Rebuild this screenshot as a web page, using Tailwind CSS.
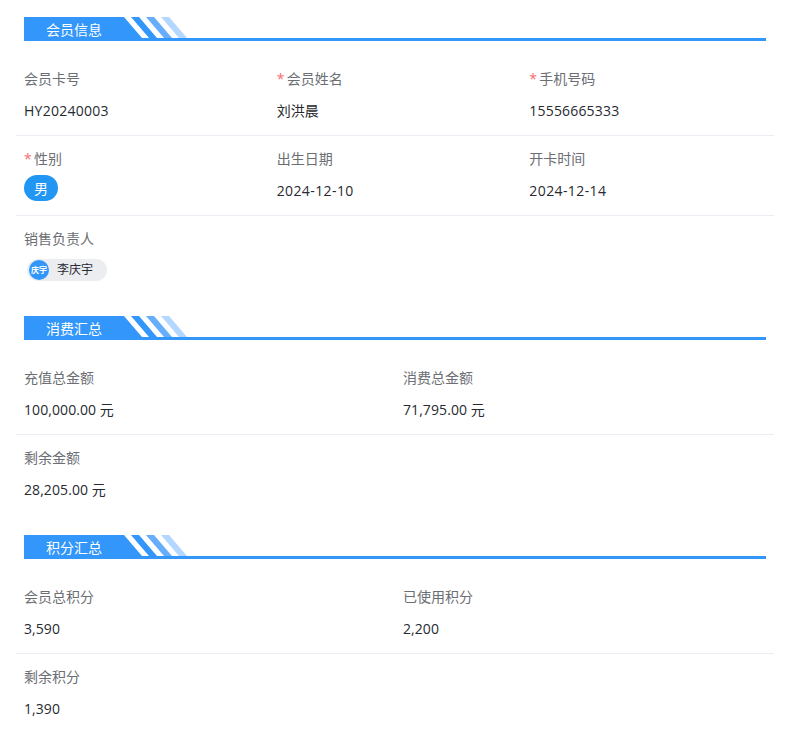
<!DOCTYPE html>
<html lang="zh">
<head>
<meta charset="utf-8">
<script src="https://cdn.jsdelivr.net/npm/@tailwindcss/browser@4"></script>
</head>
<body class="bg-white font-['Open_Sans','Noto_Sans_CJK_SC',sans-serif] text-sm text-[#272a30]">
<main class="w-[796px] h-[731px] overflow-hidden pt-[17px] pl-4 pr-[22px]">

<header class="relative mx-2 h-6 border-b-[3px] border-[#3296fa]">
  <svg class="absolute left-0 top-0" width="165" height="21" viewBox="0 0 165 21"><polygon points="0,0 100,0 118,21 0,21" fill="#3296fa"/><polygon points="107,0 115,0 133,21 125,21" fill="#3296fa"/><polygon points="122,0 130,0 148,21 140,21" fill="#66adfb"/><polygon points="137,0 145,0 163,21 155,21" fill="#b3d7fe"/></svg>
  <h2 class="absolute left-[22px] top-0 leading-[25px] text-sm text-white">会员信息</h2>
</header>
<section class="grid grid-cols-3 mt-[17px]">
  <div class="px-2 pt-[11px] h-[78px] border-b border-[#ebeef5]"><div class="h-5 leading-5 text-[#6b6e73]">会员卡号</div><div class="mt-3 leading-5 tracking-[0.25px]">HY20240003</div></div>
  <div class="px-2 pt-[11px] h-[78px] border-b border-[#ebeef5]"><div class="h-5 leading-5 text-[#6b6e73]"><span class="inline-block w-[10px] text-[#f56c6c]">*</span>会员姓名</div><div class="mt-3 leading-5">刘洪晨</div></div>
  <div class="px-2 pt-[11px] h-[78px] border-b border-[#ebeef5]"><div class="h-5 leading-5 text-[#6b6e73]"><span class="inline-block w-[10px] text-[#f56c6c]">*</span>手机号码</div><div class="mt-3 leading-5 tracking-[0.18px]">15556665333</div></div>
  <div class="px-2 pt-[13px] h-20 border-b border-[#ebeef5]"><div class="h-5 leading-5 text-[#6b6e73]"><span class="inline-block w-[10px] text-[#f56c6c]">*</span>性别</div><div class="mt-[6px] w-[34px] h-[26px] rounded-full bg-[#2196f3] text-white text-center leading-[27px]">男</div></div>
  <div class="px-2 pt-[13px] h-20 border-b border-[#ebeef5]"><div class="h-5 leading-5 text-[#6b6e73]">出生日期</div><div class="mt-3 leading-5 tracking-[0.4px]">2024-12-10</div></div>
  <div class="px-2 pt-[13px] h-20 border-b border-[#ebeef5]"><div class="h-5 leading-5 text-[#6b6e73]">开卡时间</div><div class="mt-3 leading-5 tracking-[0.4px]">2024-12-14</div></div>
  <div class="col-span-3 px-2 pt-[13px] h-[100px]"><div class="h-5 leading-5 text-[#6b6e73]">销售负责人</div>
    <div class="mt-[10px] ml-[3px] w-[80px] h-[22px] rounded-full bg-[#ebedf0] flex items-center pl-[2px]"><span class="w-5 h-5 rounded-full bg-[#3296fa] text-white text-[8px] font-bold flex items-center justify-center">庆宇</span><span class="ml-2 text-xs">李庆宇</span></div></div>
</section>

<header class="relative mx-2 h-6 border-b-[3px] border-[#3296fa]">
  <svg class="absolute left-0 top-0" width="165" height="21" viewBox="0 0 165 21"><polygon points="0,0 100,0 118,21 0,21" fill="#3296fa"/><polygon points="107,0 115,0 133,21 125,21" fill="#3296fa"/><polygon points="122,0 130,0 148,21 140,21" fill="#66adfb"/><polygon points="137,0 145,0 163,21 155,21" fill="#b3d7fe"/></svg>
  <h2 class="absolute left-[22px] top-0 leading-[25px] text-sm text-white">消费汇总</h2>
</header>
<section class="grid grid-cols-2 mt-[17px]">
  <div class="px-2 pt-[11px] h-[78px] border-b border-[#ebeef5]"><div class="h-5 leading-5 text-[#6b6e73]">充值总金额</div><div class="mt-3 leading-5 tracking-[0.08px]">100,000.00 元</div></div>
  <div class="px-2 pt-[11px] h-[78px] border-b border-[#ebeef5]"><div class="h-5 leading-5 text-[#6b6e73]">消费总金额</div><div class="mt-3 leading-5 tracking-[0.08px]">71,795.00 元</div></div>
  <div class="col-span-2 px-2 pt-[13px] h-[100px]"><div class="h-5 leading-5 text-[#6b6e73]">剩余金额</div><div class="mt-3 leading-5 tracking-[0.08px]">28,205.00 元</div></div>
</section>

<header class="relative mx-2 h-6 border-b-[3px] border-[#3296fa]">
  <svg class="absolute left-0 top-0" width="165" height="21" viewBox="0 0 165 21"><polygon points="0,0 100,0 118,21 0,21" fill="#3296fa"/><polygon points="107,0 115,0 133,21 125,21" fill="#3296fa"/><polygon points="122,0 130,0 148,21 140,21" fill="#66adfb"/><polygon points="137,0 145,0 163,21 155,21" fill="#b3d7fe"/></svg>
  <h2 class="absolute left-[22px] top-0 leading-[25px] text-sm text-white">积分汇总</h2>
</header>
<section class="grid grid-cols-2 mt-[17px]">
  <div class="px-2 pt-[11px] h-[78px] border-b border-[#ebeef5]"><div class="h-5 leading-5 text-[#6b6e73]">会员总积分</div><div class="mt-3 leading-5 tracking-[0.08px]">3,590</div></div>
  <div class="px-2 pt-[11px] h-[78px] border-b border-[#ebeef5]"><div class="h-5 leading-5 text-[#6b6e73]">已使用积分</div><div class="mt-3 leading-5 tracking-[0.08px]">2,200</div></div>
  <div class="col-span-2 px-2 pt-[13px] h-[77px]"><div class="h-5 leading-5 text-[#6b6e73]">剩余积分</div><div class="mt-3 leading-5 tracking-[0.08px]">1,390</div></div>
</section>
</main>
</body>
</html>
